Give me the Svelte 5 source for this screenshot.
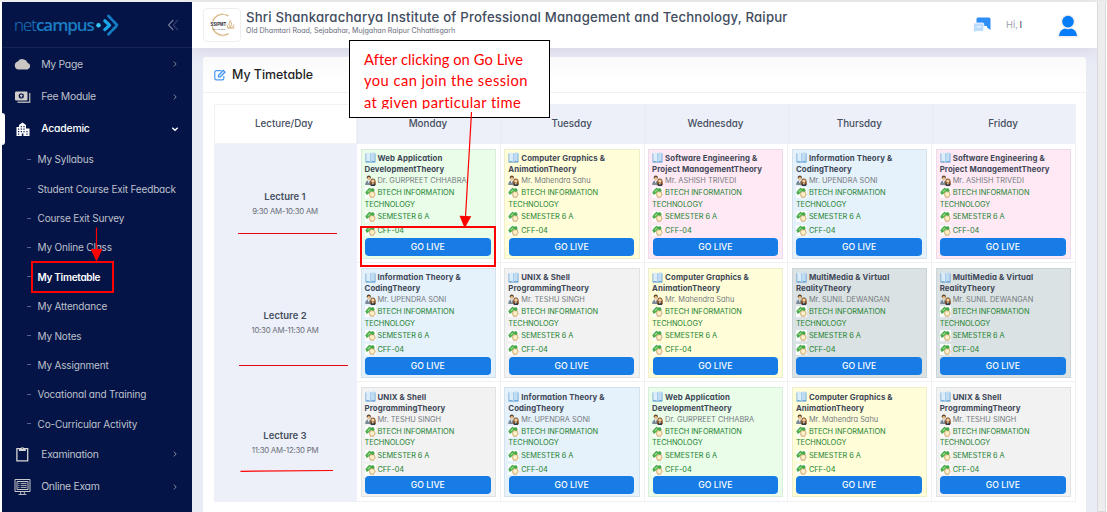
<script>
  const mainTop = [
    { label: 'My Page', icon: 'cloud' },
    { label: 'Fee Module', icon: 'money' },
    { label: 'Academic', icon: 'building', open: true }
  ];
  const sub = [
    'My Syllabus', 'Student Course Exit Feedback', 'Course Exit Survey', 'My Online Class', 'My Timetable',
    'My Attendance', 'My Notes', 'My Assignment', 'Vocational and Training', 'Co-Curricular Activity'
  ];
  const mainBottom = [
    { label: 'Examination', icon: 'clipboard' },
    { label: 'Online Exam', icon: 'monitor' }
  ];
  const days = ['Monday', 'Tuesday', 'Wednesday', 'Thursday', 'Friday'];
  const subjects = {
    web: { a: 'Web Application', b: 'DevelopmentTheory', t: 'Dr. GURPREET CHHABRA', c: 'green' },
    cg: { a: 'Computer Graphics &', b: 'AnimationTheory', t: 'Mr. Mahendra Sahu', c: 'yellow' },
    se: { a: 'Software Engineering &', b: 'Project ManagementTheory', t: 'Mr. ASHISH TRIVEDI', c: 'pink' },
    it: { a: 'Information Theory &', b: 'CodingTheory', t: 'Mr. UPENDRA SONI', c: 'blue' },
    ux: { a: 'UNIX & Shell', b: 'ProgrammingTheory', t: 'Mr. TESHU SINGH', c: 'gray' },
    mm: { a: 'MultiMedia & Virtual', b: 'RealityTheory', t: 'Mr. SUNIL DEWANGAN', c: 'slate' }
  };
  const lectures = [
    { name: 'Lecture 1', time: '9:30 AM-10:30 AM', slots: ['web', 'cg', 'se', 'it', 'se'] },
    { name: 'Lecture 2', time: '10:30 AM-11:30 AM', slots: ['it', 'ux', 'cg', 'mm', 'mm'] },
    { name: 'Lecture 3', time: '11:30 AM-12:30 PM', slots: ['ux', 'it', 'web', 'cg', 'ux'] }
  ];
</script>

{#snippet icon(name)}
  <svg class="nav-icon" viewBox="0 0 18 18">
    {#if name === 'cloud'}
      <path fill="#c9c6c4" d="M4.300 14.500A4.100 4.100 0 0 1 3.800 6.500 5.500 5.500 0 0 1 13.500 7.700 3.500 3.500 0 0 1 13.500 14.500z" />
    {:else if name === 'money'}
      <rect x="1" y="3.500" width="12.500" height="9" rx="1.200" fill="#d0cdcb" />
      <rect x="4.800" y="5.400" width="5" height="5.200" rx="1.800" fill="#061648" />
      <path d="M7.300 6.500v3M6 7.600h2.600" stroke="#d0cdcb" stroke-width="1.100" />
      <path d="M15.700 5v9.300H3.500" fill="none" stroke="#a9a9b0" stroke-width="1.400" />
    {:else if name === 'building'}
      <path fill="#fff" fill-rule="evenodd" d="M2.500 7H5V5l3.500-2.500L12 5v3.500h3.500V16h-13zM4 8.500v1.200h1.200V8.500zm0 2.500v1.200h1.200V11zm0 2.500v1.200h1.200v-1.200zM6.700 6v1.200h1.200V6zm0 2.500v1.200h1.200V8.500zm0 2.500v1.200h1.200V11zM9.400 6v1.200h1.200V6zm0 2.500v1.200h1.200V8.500zm0 2.500v1.200h1.200V11zm3 0v1.200h1.200V11zm0 2.500v1.200h1.200v-1.200zM7.800 13.500V16h1.600v-2.500z" />
    {:else if name === 'clipboard'}
      <path fill="none" stroke="#d8d6d4" stroke-width="1.300" d="M2.900 3.600h10.800v12.200H2.900z" />
      <path fill="#d8d6d4" d="M5 3h2a1.500 1.500 0 0 1 2.800 0h2v3H5z" />
      <circle cx="8.400" cy="3" r=".6" fill="#061648" />
    {:else}
      <path fill="none" stroke="#c8c7ca" stroke-width="1" d="M1 1.500h15v12H1zM3 3.500h11v8H3z" />
      <path fill="none" stroke="#c8c7ca" stroke-width=".9" d="M4.300 5.400h1.200M6.700 5.400h6M4.300 7.400h1.200M6.700 7.400h6M4.300 9.400h1.200M6.700 9.400h6M6.700 13.500v2.800M10.300 13.500v2.800M4.500 16.500h8" />
    {/if}
  </svg>
{/snippet}

{#snippet navItem(item)}
  <div class="nav-item" class:open={item.open}>
    {@render icon(item.icon)}
    <span class="nav-label">{item.label}</span>
    <svg class="chev" viewBox="0 0 8 8">
      {#if item.open}<path d="M1.300 2.800 4 5.300l2.700-2.500" />{:else}<path d="m2.800 1.600 2.400 2.400-2.400 2.400" />{/if}
    </svg>
  </div>
{/snippet}

{#snippet book()}
  <svg class="ic" viewBox="0 0 11 11">
    <path fill="#4a90cc" d="M.6 1.500h9.800v9H.6z" />
    <path fill="#dcedfa" d="M1.200.6q2.800-.5 4.300.6v8.700q-1.500-1-4.300-.5z" />
    <path fill="#bfdcf3" d="M9.800.6Q7 .1 5.500 1.200v8.700q1.500-1 4.300-.5z" />
    <path stroke="#a3c8e8" stroke-width=".4" d="M5.500 1.200v8.700" />
  </svg>
{/snippet}

{#snippet people()}
  <svg class="ic" viewBox="0 0 11 11">
    <path fill="#7b8896" d="M.2 10q0-4.300 3.400-4.500Q6 5.600 6.300 10z" />
    <circle cx="3.800" cy="2.500" r="2.100" fill="#5b4630" />
    <circle cx="3.900" cy="3.500" r="1.600" fill="#edc08c" />
    <path fill="#fff" d="m2.900 5.500 1.700.1-.8 3z" />
    <path fill="#85572b" d="M5 10q-.4-6.600 2.900-6.600T10.800 10z" />
    <circle cx="7.900" cy="6" r="1.600" fill="#f7d3a5" />
    <path fill="#363a48" d="M5.600 11q.1-2.700 2.300-2.700t2.300 2.700z" />
    <path fill="#f6dfbf" d="M7 7.700h1.800l-.9 2.600z" />
  </svg>
{/snippet}

{#snippet tag()}
  <svg class="ic" viewBox="0 0 11 11">
    <path fill="#fff" opacity=".85" d="M0 0h11v11H0z" />
    <path fill="#ecc98c" stroke="#a57f45" stroke-width=".4" d="M4 6.500 6 4.200l3.300.4 1 3.200-1.600 2.600-3.400-.1z" />
    <path fill="#fcefcd" d="m5 6.900 1.400-1.700 2.500.5.4 2.200-1.200 1.500-2-.2z" />
    <path fill="#45a947" d="M.3 5.200 2.800 2.300 4.500.7l1.600 1 2-.6 1.700 2.200-1.600 1.800-2.100-1.200L4 6.200 1.800 8.100z" />
    <path fill="#9bdb86" d="m2 5 2.700-2.800 1 .8L3.300 5.500z" />
  </svg>
{/snippet}

<div class="page">
  <aside>
    <div class="brand">
      <span class="wordmark"><span class="thin">net</span><b>campus</b></span>
      <svg class="brand-mark" viewBox="0 0 25 24">
        <path fill="none" stroke="#167dc6" stroke-width="2.800" stroke-linecap="round" stroke-dasharray="5 2.200" d="m13.500 3 8.700 9.200-8.700 9" />
        <path fill="none" stroke="#1aa5e8" stroke-width="3.200" stroke-linecap="round" stroke-linejoin="round" d="m9.800 7.800 4.800 4.400-4.800 4.400" />
        <circle cx="3.500" cy="12.200" r="2.200" fill="#35c8f5" />
      </svg>
      <svg class="collapse" viewBox="0 0 12 12"><path stroke="#777b98" d="M6.300 1 1.500 6l4.800 5" /><path stroke="#343e70" d="M11 1 6.200 6l4.800 5" /></svg>
    </div>
    <nav>
      {#each mainTop as item}{@render navItem(item)}{/each}
      <div class="subnav">
        {#each sub as s}
          <div class="sub" class:current={s === 'My Timetable'}><i></i><span>{s}</span></div>
        {/each}
      </div>
      {#each mainBottom as item}{@render navItem(item)}{/each}
    </nav>
    <div class="marker"></div>
  </aside>

  <div class="content">
    <header>
      <div class="crest">
        <svg viewBox="0 0 28 28">
          <path fill="none" stroke="#d3ae78" stroke-width="1.200" d="M20.500 5A10.500 10.500 0 1 0 20.500 22.500" />
          <path fill="none" stroke="#ead7b8" stroke-width=".8" d="M18 3.700A10.500 10.500 0 0 0 4 10M18 24.500A10.500 10.500 0 0 1 5 19" />
          <path fill="none" stroke="#d3ae78" stroke-width=".9" d="M22.300 9.500q-3 4 0 6.500 3-2.500 0-6.500M18.800 13.500q0 3.500 3.500 3.500 3.700 0 3.700-3.500M18.500 17h8" />
          <path fill="#fff" d="M1 10.500h17v5H1z" />
          <text x="2.500" y="14.800" class="crest-name" textLength="15.500" lengthAdjust="spacingAndGlyphs">SSIPMT</text>
          <text x="5" y="18.500" class="crest-city" textLength="12">RAIPUR</text>
        </svg>
      </div>
      <div class="titles">
        <h1>Shri Shankaracharya Institute of Professional Management and Technology, Raipur</h1>
        <p>Old Dhamtari Road, Sejabahar, Mujgahan Raipur Chhattisgarh</p>
      </div>
      <svg class="chat" viewBox="0 0 18 16">
        <path fill="#2f8ff8" d="M5 .5h11q1.500 0 1.500 1.500v11L14 10.500V9H3.500V2Q3.500.500 5 .500z" />
        <path fill="#bcdcff" stroke="#fff" stroke-width=".8" d="M1.500 6h8.300q1 0 1 1v6.300q0 1-1 1H3.500L.5 15.500V7q0-1 1-1z" />
        <path fill="none" stroke="#fff" stroke-width="1" d="M4 9.500q2 1.500 4 0" />
      </svg>
      <span class="hi">Hi, <b>I</b></span>
      <svg class="user" viewBox="0 0 22 24">
        <circle cx="11" cy="7.600" r="7.200" fill="#f0eeec" /><path fill="#f0eeec" d="M0 23.500q1-9 11-9t11 9z" />
        <circle cx="11" cy="7.600" r="5.800" fill="#087df8" /><path fill="#087df8" d="M2 22q.8-6.800 6-7.400 3 1.200 6 0 5.200.600 6 7.400z" />
      </svg>
    </header>

    <main>
      <div class="panel-head">
        <svg viewBox="0 0 12 12"><path fill="none" stroke="#4a99f5" stroke-width="1.200" d="M7.500 1.700H2.200Q.8 1.700.8 3.100v6.300q0 1.400 1.400 1.400h6.200q1.400 0 1.400-1.400V7" /><path fill="#cfe4fd" stroke="#3a8ff4" stroke-width="1.100" d="m4.500 6.200 4.800-4.800L11.100 3.200 6.300 8H4.500z" /></svg>
        <h2>My Timetable</h2>
      </div>
      <div class="table">
        <div class="th first">Lecture/Day</div>
        {#each days as d}<div class="th">{d}</div>{/each}
        {#each lectures as lec}
          <div class="lecture"><strong>{lec.name}</strong><small>{lec.time}</small></div>
          {#each lec.slots as key}
            {@const s = subjects[key]}
            <div class="td">
              <div class="card {s.c}">
                <div class="line bold">{@render book()}{s.a}</div>
                <div class="line bold">{s.b}</div>
                <div class="line teacher">{@render people()}{s.t}</div>
                <div class="line g">{@render tag()}BTECH INFORMATION</div>
                <div class="line g tech">TECHNOLOGY</div>
                <div class="line g tall">{@render tag()}SEMESTER 6 A</div>
                <div class="line g tall">{@render tag()}CFF-04</div>
                <button>GO LIVE</button>
              </div>
            </div>
          {/each}
        {/each}
      </div>
    </main>
  </div>
  <div class="scroll"><div class="thumb"></div></div>

  <div class="callout"><p>After clicking on Go Live<br /><span class="l2">you can join the session</span><br /><span class="l3">at given particular time</span></p></div>
  <svg class="marks" viewBox="0 0 1107 512">
    <g fill="none" stroke="#f00">
      <path stroke-width="2" d="M32 262h81v30H32zM361 227h134v39H361z" />
      <path stroke-width="1.200" d="M96.500 227.500V250M471.500 112 465.500 217" />
      <path d="M238 233.500h99" stroke="#e30613" />
      <path d="M239 365.500h109" stroke="#e30613" />
      <path stroke-width="1.200" d="M240.500 471.300 333 470.500" />
    </g>
    <path fill="#f00" d="M90.500 249h12l-6 12.500zM459.500 215.700l11.800.5-6.600 12z" />
  </svg>
</div>

<style>
  :global(body) { background: #fff; overflow: hidden; }
  .page { position: relative; display: flex; width: 1107px; height: 512px; padding: 2px 1px 0 2px; box-sizing: border-box; overflow: hidden; background: #fff; box-shadow: inset 0 2px #ececec; font-family: Inter, "Noto Sans", sans-serif; font-feature-settings: "cv11"; }
  aside { position: relative; width: 190px; flex: none; background: #041447; color: #bfc0cb; }
  .brand { display: flex; align-items: center; height: 46px; padding: 0 13px 0 12px; border-bottom: 1px solid #182552; box-sizing: border-box; }
  .wordmark { font: 17px/22px "Open Sans", sans-serif; color: #1a7cc2; letter-spacing: -1.050px; width: 81px; white-space: nowrap; }
  .wordmark b { font-weight: 600; }
  .thin { font-weight: 300; }
  .brand-mark { width: 25px; height: 24px; flex: none; }
  .collapse { width: 12px; height: 12px; margin-left: auto; fill: none; stroke-width: 1.100; }
  .nav-item { display: flex; align-items: center; height: 32.400px; padding: 0 13px 0 12px; font-size: 10.400px; letter-spacing: -.28px; }
  .nav-icon { width: 18px; height: 18px; }
  .nav-label { margin-left: 9.200px; flex: 1; }
  .open { color: #fff; font-weight: 500; letter-spacing: -.2px; }
  .chev { width: 8px; height: 8px; fill: none; stroke: #8388a2; stroke-width: 1; }
  .open .chev { stroke: #fff; stroke-width: 1.400; }
  .subnav { margin-top: -.4px; }
  .sub { display: flex; align-items: center; height: 29.350px; padding-left: 25px; font-size: 10px; letter-spacing: -.17px; white-space: nowrap; }
  .sub i { width: 4px; height: 1px; background: #59628a; margin-right: 6.500px; }
  .current { color: #fff; font-weight: 600; letter-spacing: -.3px; }
  .marker { position: absolute; left: -2px; top: 111px; width: 5px; height: 32px; border-radius: 0 3px 3px 0; background: #fff; }
  .content { flex: 1; background: #e9ebf5; display: flex; flex-direction: column; }
  header { display: flex; height: 46px; flex: none; background: #fff; box-shadow: 0 3px 14px rgba(90, 80, 130, .13); box-sizing: border-box; padding-left: 11px; }
  .crest { width: 36px; height: 32px; border: 1px solid #eee; border-radius: 4px; margin-top: 6px; display: grid; place-items: center; }
  .crest svg { width: 28px; height: 28px; }
  .crest-name { font: 700 5px "Liberation Sans", sans-serif; fill: #24272d; }
  .crest-city { font: 700 2.500px "Liberation Sans", sans-serif; fill: #55575d; }
  .titles { margin-left: 5px; width: 720px; white-space: nowrap; }
  h1 { margin: 8px 0 0; font-size: 13.200px; letter-spacing: .18px; line-height: 15px; font-weight: 500; color: #424c5e; }
  p { margin: 1px 0 0; font-size: 7.100px; line-height: 10px; color: #666b77; }
  .chat { width: 18px; height: 16px; margin: 15px 0 0 7px; }
  .hi { margin: 17px 0 0 15px; width: 51px; font-size: 9.300px; line-height: 12px; color: #9da0b0; }
  .hi b { color: #555b6e; font-weight: 500; margin-left: -1px; }
  .user { width: 22px; height: 24px; margin-top: 12px; }
  main { flex: 1; margin: 9px 11px 0; background: #fff; border-radius: 4px 4px 0 0; }
  .panel-head { display: flex; align-items: center; height: 36px; padding-left: 11px; border-bottom: 1px solid #f0f0f3; border-radius: 4px 4px 0 0; background: linear-gradient(#fafafa, #fff 24px); box-sizing: border-box; }
  .panel-head svg { width: 12px; height: 12px; }
  h2 { margin: 0 0 0 6px; font-size: 12.400px; font-weight: 500; color: #1d1e24; }
  .table { display: grid; grid-template-columns: 143px repeat(5, 143.800px); grid-template-rows: 39.700px repeat(3, 119.400px); margin: 11px 0 0 11px; width: 862px; font-size: 7.400px; }
  .th { display: grid; place-items: center; background: #edf0f9; font-size: 9.800px; font-weight: 500; color: #454e5f; border-left: 1px solid #e8ebf4; box-sizing: border-box; padding-right: 3px; }
  .first { background: #fff; border: 1px solid #f1f2f5; }
  .lecture { display: flex; flex-direction: column; align-items: center; justify-content: center; background: #edf0f9; padding-right: 1px; }
  strong { font-size: 9.500px; font-weight: 600; line-height: 14px; color: #454e5f; }
  small { font-size: 7.800px; letter-spacing: -.25px; line-height: 12px; color: #686d77; margin-top: 1px; }
  .td { border-right: 1px solid #f0f1f3; border-bottom: 1px solid #f0f1f3; box-sizing: border-box; padding: 5px 4px 4px 3.500px; min-width: 0; }
  .card { height: 110px; padding: 2.500px 4px 0 3px; border: 1px solid rgba(100, 120, 130, .12); box-sizing: border-box; white-space: nowrap; }
  .green { background: #e9fde9; } .yellow { background: #fffed8; } .pink { background: #ffe9f5; }
  .blue { background: #e5f1fb; } .gray { background: #f2f2f2; } .slate { background: #dae2e3; }
  .line { display: flex; align-items: center; height: 11.200px; color: #757b80; }
  .bold { font-size: 7.800px; letter-spacing: .12px; font-weight: 700; color: #3e4757; }
  .teacher { height: 12px; }
  .g { color: #258332; height: 12px; letter-spacing: -.08px; }
  .tech { height: 11px; }
  .tall { height: 14px; }
  .ic { width: 11px; height: 11px; margin-right: 2px; flex: none; }
  button { display: block; width: 125.500px; height: 18px; margin: 0 0 0 .5px; padding: 0; border: 0; border-radius: 4px; background: #177ce5; color: #fff; font: 500 8.700px Inter, sans-serif; }
  .scroll { width: 7px; background: #f2f2f2; border: 1px solid #d9d9dc; border-top: 0; }
  .thumb { height: 100%; border-radius: 4px; background: #ededed; }
  .callout { position: absolute; left: 349px; top: 40px; width: 201px; height: 78px; box-sizing: border-box; border: 1px solid #000; background: #fff; padding: 7.500px 0 0 14px; }
  .callout p { margin: 0; height: 60.500px; overflow: hidden; font: 14.700px/21.500px Lato, sans-serif; letter-spacing: .07px; color: #f00; white-space: nowrap; }
  .l2 { letter-spacing: .45px; }
  .l3 { letter-spacing: .4px; }
  .marks { position: absolute; left: 0; top: 0; width: 1107px; height: 512px; pointer-events: none; }
</style>
